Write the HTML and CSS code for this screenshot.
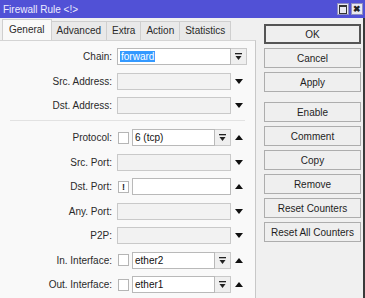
FILE: index.html
```html
<!DOCTYPE html>
<html lang="en">
<head>
  <meta charset="UTF-8" />
  <title>Firewall Rule</title>
  <link rel="stylesheet" href="styles.css">
</head>
<body>
  <div class="window">
    <div class="titlebar">
      <span class="title">Firewall Rule &lt;!&gt;</span>
      <span class="tb-btns">
        <span class="tb-btn"><span class="max-box"></span></span>
        <span class="tb-btn close">&#x2716;</span>
      </span>
    </div>

    <div class="main">
      <div class="left">
        <div class="tabs">
          <span class="tab active">General</span>
          <span class="tab">Advanced</span>
          <span class="tab">Extra</span>
          <span class="tab">Action</span>
          <span class="tab">Statistics</span>
        </div>

        <div class="panel">
          <div class="group">
            <div class="row">
              <label>Chain:</label>
              <div class="ctrl">
                <div class="input filled"><span class="sel">forward</span></div>
                <span class="dd"><svg width="9" height="9" viewBox="0 0 9 9"><rect x="1" y="1" width="7" height="1.3" fill="#222"/><path d="M1.5 4 L7.5 4 L4.5 8 Z" fill="#222"/></svg></span>
              </div>
            </div>
            <div class="row">
              <label>Src. Address:</label>
              <div class="ctrl">
                <div class="input"></div>
                <span class="arrow down"></span>
              </div>
            </div>
            <div class="row">
              <label>Dst. Address:</label>
              <div class="ctrl">
                <div class="input"></div>
                <span class="arrow down"></span>
              </div>
            </div>
          </div>

          <div class="sep"></div>

          <div class="group">
            <div class="row">
              <label>Protocol:</label>
              <div class="ctrl">
                <span class="check"></span>
                <div class="input filled">6 (tcp)</div>
                <span class="dd"><svg width="9" height="9" viewBox="0 0 9 9"><rect x="1" y="1" width="7" height="1.3" fill="#222"/><path d="M1.5 4 L7.5 4 L4.5 8 Z" fill="#222"/></svg></span>
                <span class="arrow up"></span>
              </div>
            </div>
            <div class="row">
              <label>Src. Port:</label>
              <div class="ctrl">
                <div class="input"></div>
                <span class="arrow down"></span>
              </div>
            </div>
            <div class="row">
              <label>Dst. Port:</label>
              <div class="ctrl">
                <span class="check bang">!</span>
                <div class="input filled"></div>
                <span class="arrow up"></span>
              </div>
            </div>
            <div class="row">
              <label>Any. Port:</label>
              <div class="ctrl">
                <div class="input"></div>
                <span class="arrow down"></span>
              </div>
            </div>
            <div class="row">
              <label>P2P:</label>
              <div class="ctrl">
                <div class="input"></div>
                <span class="arrow down"></span>
              </div>
            </div>
            <div class="row">
              <label>In. Interface:</label>
              <div class="ctrl">
                <span class="check"></span>
                <div class="input filled">ether2</div>
                <span class="dd"><svg width="9" height="9" viewBox="0 0 9 9"><rect x="1" y="1" width="7" height="1.3" fill="#222"/><path d="M1.5 4 L7.5 4 L4.5 8 Z" fill="#222"/></svg></span>
                <span class="arrow up"></span>
              </div>
            </div>
            <div class="row">
              <label>Out. Interface:</label>
              <div class="ctrl">
                <span class="check"></span>
                <div class="input filled">ether1</div>
                <span class="dd"><svg width="9" height="9" viewBox="0 0 9 9"><rect x="1" y="1" width="7" height="1.3" fill="#222"/><path d="M1.5 4 L7.5 4 L4.5 8 Z" fill="#222"/></svg></span>
                <span class="arrow up"></span>
              </div>
            </div>
          </div>
        </div>
      </div>

      <div class="buttons">
        <button class="btn default">OK</button>
        <button class="btn">Cancel</button>
        <button class="btn">Apply</button>
        <button class="btn spaced">Enable</button>
        <button class="btn">Comment</button>
        <button class="btn">Copy</button>
        <button class="btn">Remove</button>
        <button class="btn">Reset Counters</button>
        <button class="btn">Reset All Counters</button>
      </div>
    </div>
  </div>
</body>
</html>
```

FILE: styles.css
```css
body {
  margin: 0;
  font-family: 'Liberation Sans', Arial, sans-serif;
  font-size: 10px;
  color: #1e1e1e;
  background: #f0f0f0;
}
.window {
  width: 365px;
  height: 298px;
  overflow: hidden;
  display: flex;
  flex-direction: column;
}
.titlebar {
  height: 18px;
  background: #5151d6;
  color: #ececff;
  display: flex;
  align-items: center;
  justify-content: space-between;
  padding: 0 2px 0 3px;
  font-size: 10px;
}
.tb-btns {
  display: flex;
  gap: 2px;
}
.tb-btn {
  width: 12px;
  height: 12px;
  background: #e8e8f0;
  border: 1px solid #9090c0;
  box-sizing: border-box;
  display: flex;
  align-items: center;
  justify-content: center;
  color: #222;
  font-size: 9px;
  font-weight: bold;
}
.max-box {
  width: 6px;
  height: 6px;
  border: 1px solid #333;
  border-top-width: 2px;
}
.main {
  flex: 1;
  display: flex;
  border-right: 2px solid #3a3a3a;
}
.left {
  width: 256px;
  display: flex;
  flex-direction: column;
}
.tabs {
  display: flex;
  align-items: flex-end;
  height: 22px;
  padding-left: 2px;
}
.tab {
  height: 18px;
  line-height: 18px;
  padding: 0 5px;
  background: #e9e9e9;
  border: 1px solid #cfcfcf;
  border-bottom: none;
  border-left: none;
  color: #2a2a2a;
}
.tab.active {
  height: 21px;
  line-height: 20px;
  background: #f9f9f9;
  border-left: 1px solid #cfcfcf;
  padding: 0 6px;
  margin-bottom: -1px;
}
.panel {
  flex: 1;
  background: #f9f9f9;
  border-top: 1px solid #d4d4d4;
  border-right: 1px solid #c8c8c8;
  padding-top: 7px;
}
.group {
  display: flex;
  flex-direction: column;
  gap: 7.5px;
}
.sep {
  height: 1px;
  background: #e2e2e2;
  margin: 6px 10px 8px 10px;
}
.row {
  display: flex;
  align-items: center;
  height: 17px;
}
.row label {
  width: 112px;
  text-align: right;
  color: #2a2a2a;
}
.ctrl {
  display: flex;
  align-items: center;
  margin-left: 5px;
  width: 130px;
  height: 17px;
}
.input {
  flex: 1;
  height: 17px;
  box-sizing: border-box;
  border: 1px solid #c9c9c9;
  background: #f2f2f2;
  padding-left: 2px;
  line-height: 15px;
  color: #111;
}
.input.filled {
  background: #fff;
  border-color: #b9b9b9;
}
.sel {
  background: #3399ff;
  color: #fff;
  padding: 0 1px;
}
.dd {
  width: 16px;
  height: 17px;
  box-sizing: border-box;
  background: #efefef;
  border: 1px solid #c9c9c9;
  border-left: none;
  display: flex;
  align-items: center;
  justify-content: center;
}
.check {
  width: 11px;
  height: 12px;
  box-sizing: border-box;
  border: 1px solid #b5b5b5;
  background: #fff;
  margin: 0 3px 0 1px;
  font-size: 9px;
  font-weight: bold;
  line-height: 10px;
  text-align: center;
}
.arrow {
  width: 16px;
  display: flex;
  justify-content: center;
}
.arrow::before {
  content: "";
  border-left: 4px solid transparent;
  border-right: 4px solid transparent;
}
.arrow.down::before {
  border-top: 5px solid #111;
}
.arrow.up::before {
  border-bottom: 5px solid #111;
}
.buttons {
  flex: 1;
  display: flex;
  flex-direction: column;
  gap: 4px;
  padding: 6px 1px 0 8px;
}
.btn {
  height: 20px;
  width: 97px;
  font-family: inherit;
  font-size: 10px;
  color: #1e1e1e;
  background: #efefef;
  border: 1px solid #adadad;
  padding: 0;
}
.btn.default {
  border: 2px solid #555;
}
.btn.spaced {
  margin-top: 6px;
}
```
